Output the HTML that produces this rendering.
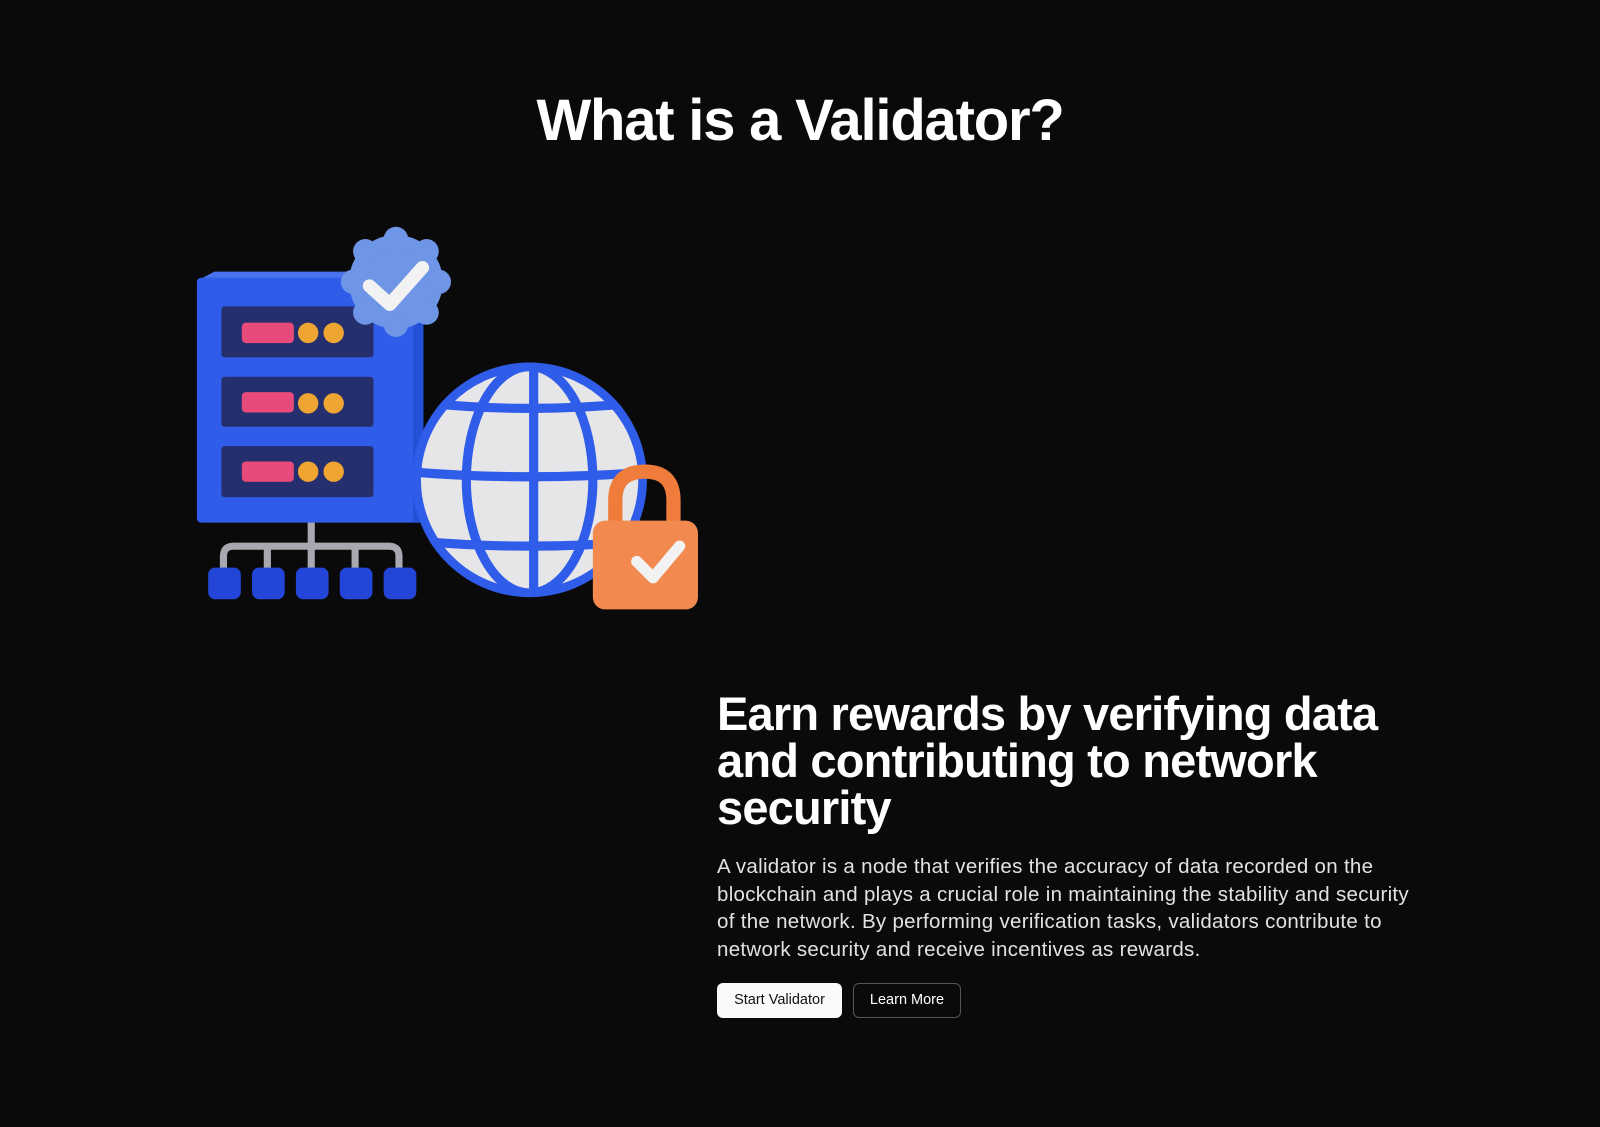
<!DOCTYPE html>
<html><head><meta charset="utf-8"><style>
html,body{margin:0;padding:0;background:#0a0a0a;width:1600px;height:1127px;overflow:hidden;font-family:"Liberation Sans",Arial,sans-serif;color:#fff}
h1{position:absolute;top:81px;left:0;width:1600px;text-align:center;margin:0;font-size:58px;font-weight:700;letter-spacing:-1.2px;line-height:80px}
svg.ill{position:absolute;left:0;top:0}
.r{position:absolute;left:717px;top:690px;width:760px}
h2{margin:0;font-size:47px;line-height:47px;font-weight:700;letter-spacing:-0.8px}
p{margin:22px 0 0;font-size:20.5px;line-height:27.5px;color:#e2e2e2;letter-spacing:0.3px;white-space:nowrap}
.b{position:absolute;top:983px;height:35px;box-sizing:border-box;border-radius:6px;font-size:14.5px;line-height:33px;text-align:center}
.b1{left:717px;width:125px;background:#fafafa;color:#111;border:1px solid #fafafa}
.b2{left:853px;width:108px;border:1px solid #555;color:#fff}
</style></head><body>
<h1>What is a Validator?</h1>
<svg class="ill" width="1600" height="1127" viewBox="0 0 1568 1104">
<defs><clipPath id="gc"><circle cx="519" cy="470" r="115"/></clipPath></defs>
<g stroke="#a8a8b0" stroke-width="7" fill="none" stroke-linecap="round">
<path d="M305 512V535M219 560V545Q219 535 229 535H381Q391 535 391 545V560M262 535V560M305 535V560M348 535V560"/>
</g>
<g fill="#2446d8">
<rect x="204" y="556" width="32" height="31" rx="7"/><rect x="247" y="556" width="32" height="31" rx="7"/><rect x="290" y="556" width="32" height="31" rx="7"/><rect x="333" y="556" width="32" height="31" rx="7"/><rect x="376" y="556" width="32" height="31" rx="7"/>
</g>
<path d="M193 275L210 266H405L415 275Z" fill="#4a72ee"/>
<rect x="193" y="272" width="222" height="240" rx="4" fill="#2f5ce8"/>
<rect x="405" y="272" width="10" height="240" fill="#2550d8"/>
<g fill="#252f6e">
<rect x="217" y="300" width="149" height="50" rx="3"/><rect x="217" y="369" width="149" height="49" rx="3"/><rect x="217" y="437" width="149" height="50" rx="3"/>
</g>
<g fill="#e84a7b"><rect x="237" y="316" width="51" height="20" rx="4"/><rect x="237" y="384" width="51" height="20" rx="4"/><rect x="237" y="452" width="51" height="20" rx="4"/></g>
<g fill="#eea532"><circle cx="302" cy="326" r="10"/><circle cx="327" cy="326" r="10"/><circle cx="302" cy="395" r="10"/><circle cx="327" cy="395" r="10"/><circle cx="302" cy="462" r="10"/><circle cx="327" cy="462" r="10"/></g>
<g fill="#6e95e6">
<circle cx="388" cy="276" r="46"/>
<circle cx="388" cy="234" r="12"/><circle cx="388" cy="318" r="12"/><circle cx="346" cy="276" r="12"/><circle cx="430" cy="276" r="12"/>
<circle cx="358" cy="246" r="12"/><circle cx="418" cy="246" r="12"/><circle cx="358" cy="306" r="12"/><circle cx="418" cy="306" r="12"/>
</g>
<path d="M362 280L382 298L414 262" stroke="#f2f2f2" stroke-width="13" fill="none" stroke-linecap="round" stroke-linejoin="round"/>
<circle cx="519" cy="470" r="113" fill="#e6e6e8"/>
<g stroke="#2f5ce8" stroke-width="9" fill="none" clip-path="url(#gc)">
<circle cx="519" cy="470" r="111"/>
<ellipse cx="519" cy="470" rx="62" ry="111"/>
<path d="M523 359V581"/>
<path d="M400 462Q519 472 640 462"/>
<path d="M420 395Q519 405 620 395"/>
<path d="M410 530Q519 540 630 530"/>
</g>
<path d="M603 515V490Q603 462 632 462Q660 462 660 490V515" stroke="#f07c3c" stroke-width="14" fill="none"/>
<rect x="581" y="510" width="103" height="87" rx="12" fill="#f28a50"/>
<path d="M624 550L640 566L666 535" stroke="#f2f2f2" stroke-width="11" fill="none" stroke-linecap="round" stroke-linejoin="round"/>
</svg>
<div class="r">
<h2>Earn rewards by verifying data<br>and contributing to network<br>security</h2>
<p>A validator is a node that verifies the accuracy of data recorded on the<br>blockchain and plays a crucial role in maintaining the stability and security<br>of the network. By performing verification tasks, validators contribute to<br>network security and receive incentives as rewards.</p>
</div>
<div class="b b1">Start Validator</div>
<div class="b b2">Learn More</div>
</body></html>
